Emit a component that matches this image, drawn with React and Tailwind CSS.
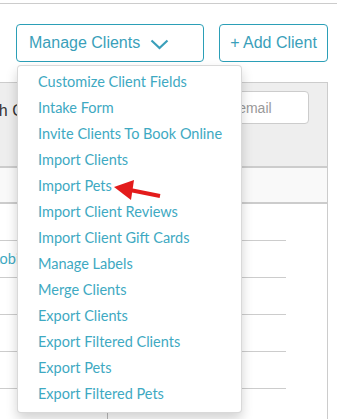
import { useState } from 'react';

const menuItems = [
  'Customize Client Fields',
  'Intake Form',
  'Invite Clients To Book Online',
  'Import Clients',
  'Import Pets',
  'Import Client Reviews',
  'Import Client Gift Cards',
  'Manage Labels',
  'Merge Clients',
  'Export Clients',
  'Export Filtered Clients',
  'Export Pets',
  'Export Filtered Pets',
];

const rows = ['', 'Robinson', '', '', '', ''];

const App = () => {
  const [open] = useState(true);

  return (
    <div className="relative w-[337px] h-[419px] overflow-hidden bg-white font-['Liberation_Sans',Arial,sans-serif]">
      {/* Top rule */}
      <div className="pt-[3px]">
        <div className="border-t border-[#cccccc]"></div>
      </div>

      {/* Action buttons */}
      <div className="mt-[20px] ml-4 flex gap-[15px]">
        <div className="relative">
          <button className="w-[188px] h-[38px] flex items-center pl-3 border border-[#2b9fb7] rounded-[4px] text-[16px] text-[#3a9fba] bg-white">
            Manage Clients
            <svg width="19" height="11" viewBox="0 0 19 11" className="ml-[10px] mt-[2px]">
              <polyline points="1.5,1.5 9.5,9 17.5,1.5" fill="none" stroke="#3a9fba" strokeWidth="2.2" />
            </svg>
          </button>

          {open && (
            <div className="absolute z-10 top-[41px] left-[1px] w-[225px] bg-white border border-black/15 rounded-[4px] shadow-[0_6px_12px_rgba(0,0,0,0.175)] pt-[3px] pb-[5px] font-['Lato',sans-serif]">
              {menuItems.map((item) => (
                <div key={item} className="h-[26px] flex items-center pl-[20px] text-[14.5px] text-[#3ea9c2] whitespace-nowrap">
                  {item}
                </div>
              ))}
            </div>
          )}
        </div>

        <button className="w-[109px] h-[38px] flex items-center justify-center border border-[#2b9fb7] rounded-[4px] text-[16px] text-[#3a9fba] bg-white">
          + Add Client
        </button>
      </div>

      {/* Client list panel (partly off the left edge) */}
      <div className="mt-[20px] -ml-[58px] w-[386px] border-t border-r border-[#cccccc]">
        <div className="h-[83px] bg-[#eeeeee] flex justify-between items-start">
          <div className="pl-[15px] pt-[16px] text-[16px] text-[#333333] whitespace-nowrap">Search Clients</div>
          <input
            readOnly
            placeholder="Search by name or email"
            className="mt-[8px] mr-[18px] w-[206px] h-[33px] px-3 bg-white border border-[#cccccc] rounded-[4px] text-[14px] placeholder:text-[#999999] outline-none"
          />
        </div>
        <div className="h-[38px] bg-[#f9f9f9] border-t-2 border-b-2 border-[#cccccc]"></div>

        <div className="w-[344px]">
          {rows.map((name, i) => (
            <div key={i} className="flex h-[37px] border-b border-[#cccccc]">
              <div className="w-[165px] flex items-center pl-[49px] text-[14.5px] text-[#3ea9c2] font-['Lato',sans-serif]">
                {name}
              </div>
              <div className="flex-1 border-l border-[#bbbbbb]"></div>
            </div>
          ))}
        </div>
      </div>

      {/* Red annotation arrow */}
      <svg className="absolute left-[110px] top-[176px] z-20" width="56" height="28" viewBox="0 0 56 28">
        <line x1="20" y1="14" x2="50" y2="20" stroke="#e31b1b" strokeWidth="4" />
        <polygon points="4,11 24,4 21,24" fill="#e31b1b" />
      </svg>
    </div>
  );
};

export default App;
